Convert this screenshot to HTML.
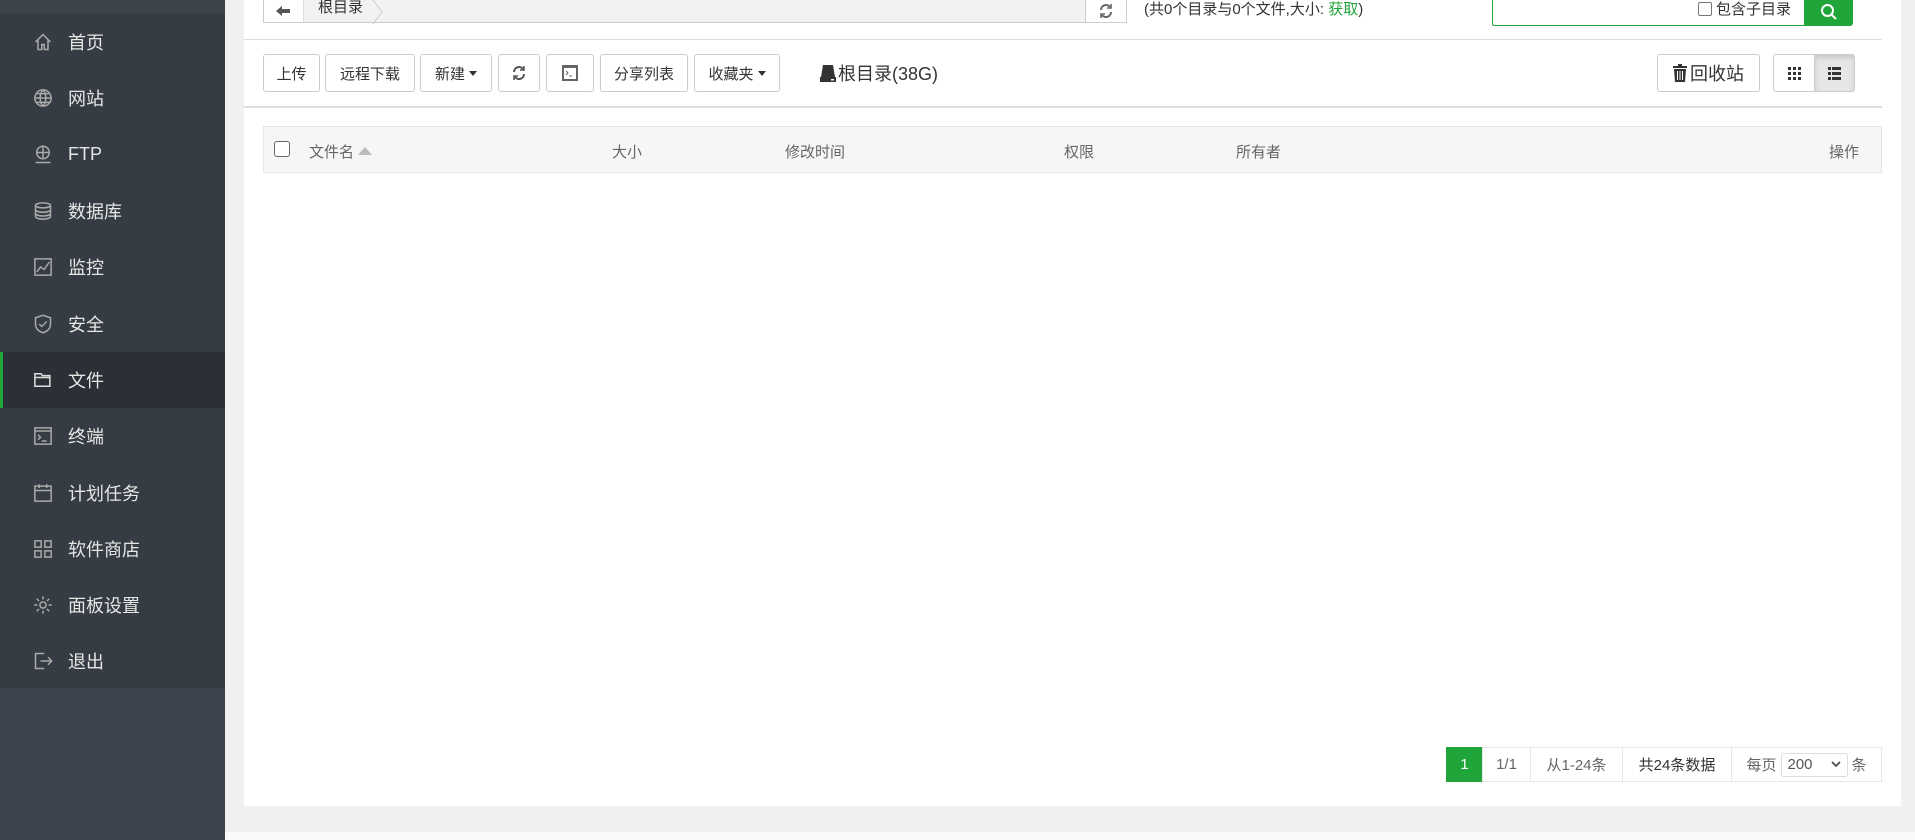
<!DOCTYPE html>
<html><head><meta charset="utf-8"><style>
*{box-sizing:border-box;margin:0;padding:0}
body{width:1915px;height:840px;overflow:hidden;background:#f0f0f0;font-family:"Liberation Sans","Noto Sans CJK SC",sans-serif;position:relative;color:#555}
.side{position:absolute;left:0;top:0;width:225px;height:840px;background:#3d444d}
.side .top{height:16px;background:#3c434b}
.menu{position:absolute;top:14px;left:0;width:225px;background:#353c43;height:674px}
.mi{height:56.3px;display:flex;align-items:center;padding-left:33px;color:#e6e6e6;font-size:18px;position:relative}
.mi .ic{width:20px;height:20px;margin-right:15px;display:flex;align-items:center;justify-content:center}
.mi .ic svg{width:20px;height:20px}
.mi.act{background:#2b3036;border-left:3px solid #20a53a;padding-left:30px}
.main{position:absolute;left:244px;top:0;width:1657px;height:806px;background:#fff}
.bottom{position:absolute;left:225px;top:832px;width:1690px;height:8px;background:#fafafa}
.abs{position:absolute}
.btn{position:absolute;top:54px;height:38px;border:1px solid #ccc;border-radius:3px;background:#fff;font-size:15px;color:#333;display:flex;align-items:center;justify-content:center}
.caret{display:inline-block;border-left:4px solid transparent;border-right:4px solid transparent;border-top:5px solid #333;margin-left:4px}
.th{position:absolute;top:126px;height:47px;left:263px;width:1619px;background:#f6f6f6;border:1px solid #e6e6e6;font-size:15px;color:#666}
.th span{position:absolute;top:14px}
.pg{position:absolute;top:747px;height:35px;border:1px solid #e6e6e6;font-size:15px;color:#666;display:flex;align-items:center;justify-content:center}
</style></head><body>
<div class="side"><div class="top"></div>
<div class="menu">
<div class="mi"><span class="ic"><svg viewBox="0 0 16 16" fill="none" stroke="#aaa" stroke-width="1.2"><path d="M2 8L8 2l6 6M4 6v8h3v-4h2v4h3V6"/></svg></span>首页</div>
<div class="mi"><span class="ic"><svg viewBox="0 0 16 16" fill="none" stroke="#aaa" stroke-width="1.2"><circle cx="8" cy="8" r="6.5"/><path d="M1.5 8h13M8 1.5c-3 3-3 10 0 13M8 1.5c3 3 3 10 0 13M3 4.5h10M3 11.5h10"/></svg></span>网站</div>
<div class="mi"><span class="ic"><svg viewBox="0 0 16 16" fill="none" stroke="#aaa" stroke-width="1.2"><circle cx="8" cy="6" r="5"/><path d="M3 6h10M8 1v10M2 14h12"/></svg></span>FTP</div>
<div class="mi"><span class="ic"><svg viewBox="0 0 16 16" fill="none" stroke="#aaa" stroke-width="1.2"><ellipse cx="8" cy="3.5" rx="6" ry="2"/><path d="M2 3.5v9c0 1.1 2.7 2 6 2s6-.9 6-2v-9M2 7c0 1.1 2.7 2 6 2s6-.9 6-2M2 10c0 1.1 2.7 2 6 2s6-.9 6-2"/></svg></span>数据库</div>
<div class="mi"><span class="ic"><svg viewBox="0 0 16 16" fill="none" stroke="#aaa" stroke-width="1.2"><rect x="1.5" y="1.5" width="13" height="13"/><path d="M3 12l3-4 3 2 4-6"/></svg></span>监控</div>
<div class="mi"><span class="ic"><svg viewBox="0 0 16 16" fill="none" stroke="#aaa" stroke-width="1.2"><path d="M8 1l6 2v5c0 4-3 6-6 7-3-1-6-3-6-7V3z"/><path d="M5 8l2 2 4-4"/></svg></span>安全</div>
<div class="mi act"><span class="ic"><svg viewBox="0 0 16 16" fill="none" stroke="#ddd" stroke-width="1.2"><path d="M1.5 3h5l1 1.5h6V13h-12z M1.5 6h12"/></svg></span>文件</div>
<div class="mi"><span class="ic"><svg viewBox="0 0 16 16" fill="none" stroke="#aaa" stroke-width="1.2"><rect x="1.5" y="1.5" width="13" height="13"/><path d="M1.5 4h13M4 7l2 2-2 2M7 12h4"/></svg></span>终端</div>
<div class="mi"><span class="ic"><svg viewBox="0 0 16 16" fill="none" stroke="#aaa" stroke-width="1.2"><rect x="1.5" y="2.5" width="13" height="12"/><path d="M1.5 6h13M5 1v3M11 1v3"/></svg></span>计划任务</div>
<div class="mi"><span class="ic"><svg viewBox="0 0 16 16" fill="none" stroke="#aaa" stroke-width="1.2"><rect x="1.5" y="1.5" width="5" height="5"/><rect x="9.5" y="1.5" width="5" height="5"/><rect x="1.5" y="9.5" width="5" height="5"/><rect x="9.5" y="9.5" width="5" height="5"/></svg></span>软件商店</div>
<div class="mi"><span class="ic"><svg viewBox="0 0 16 16" fill="none" stroke="#aaa" stroke-width="1.2"><circle cx="8" cy="8" r="2.5"/><path d="M8 1v2.5M8 12.5V15M1 8h2.5M12.5 8H15M3 3l1.8 1.8M11.2 11.2L13 13M3 13l1.8-1.8M11.2 4.8L13 3"/></svg></span>面板设置</div>
<div class="mi"><span class="ic"><svg viewBox="0 0 16 16" fill="none" stroke="#aaa" stroke-width="1.2"><path d="M9 2H2v12h7M6 8h9M12 5l3 3-3 3"/></svg></span>退出</div>
</div></div>
<div class="main"></div>
<div class="bottom"></div>
<div class="abs" style="left:263px;top:-2px;width:864px;height:25px;border:1px solid #ccc;background:#f2f2f2"></div>
<div class="abs" style="left:264px;top:-1px;width:40px;height:23px;background:#fff;border-right:1px solid #ddd;display:flex;align-items:center;justify-content:center"><svg width="16" height="12" viewBox="0 0 16 12"><path d="M0 6l6-5v3h8v4H6v3z" fill="#555"/></svg></div>
<div class="abs" style="left:318px;top:0px;font-size:15px;color:#333;line-height:16px">根目录</div>
<svg class="abs" style="left:372px;top:0" width="12" height="24"><path d="M1 0l9 12-9 12" fill="none" stroke="#ccc"/></svg>
<div class="abs" style="left:1085px;top:-1px;width:41px;height:23px;background:#fff;border-left:1px solid #ccc;display:flex;align-items:center;justify-content:center"><svg width="14" height="16" viewBox="0 0 14 16" fill="none" stroke="#666" stroke-width="2"><path d="M11 4A5 5 0 0 0 2 7M3 12a5 5 0 0 0 9-3"/><path d="M12 1v4H8M2 15v-4h4" stroke-width="1.6"/></svg></div>
<div class="abs" style="left:1144px;top:-2px;font-size:15px;color:#333">(共0个目录与0个文件,大小: <span style="color:#20a53a">获取</span>)</div>
<div class="abs" style="left:1492px;top:-2px;width:315px;height:28px;border:1px solid #20a53a;border-top:none;border-right:none;border-radius:0 0 0 2px;background:#fff"></div>
<div class="abs" style="left:1698px;top:-2px;font-size:15px;color:#333;display:flex;align-items:center"><span style="width:14px;height:14px;border:1px solid #777;border-radius:2px;margin-right:4px;display:inline-block"></span>包含子目录</div>
<div class="abs" style="left:1804px;top:-2px;width:49px;height:28px;background:#20a53a;border-radius:0 0 3px 0;display:flex;align-items:center;justify-content:center"><svg width="18" height="18" viewBox="0 0 18 18" fill="none" stroke="#fff" stroke-width="2"><circle cx="7.5" cy="7.5" r="5.5"/><path d="M11.5 11.5L16 16"/></svg></div>
<div class="abs" style="left:244px;top:39px;width:1638px;height:1px;background:#ddd"></div>
<div class="btn" style="left:263px;width:57px">上传</div>
<div class="btn" style="left:325px;width:90px">远程下载</div>
<div class="btn" style="left:420px;width:72px">新建<span class="caret"></span></div>
<div class="btn" style="left:498px;width:42px"><svg width="14" height="18" viewBox="0 0 14 16" fill="none" stroke="#555" stroke-width="2"><path d="M11 4A5 5 0 0 0 2 7M3 12a5 5 0 0 0 9-3"/><path d="M12 1v4H8M2 15v-4h4" stroke-width="1.6"/></svg></div>
<div class="btn" style="left:546px;width:48px"><svg width="18" height="18" viewBox="0 0 18 18"><rect x="1" y="1" width="16" height="16" fill="#666"/><rect x="3" y="4" width="12" height="11" fill="#fff"/><path d="M5 7l2 2-2 2M8 12h3" stroke="#666" fill="none"/></svg></div>
<div class="btn" style="left:600px;width:88px">分享列表</div>
<div class="btn" style="left:694px;width:86px">收藏夹<span class="caret"></span></div>
<div class="abs" style="left:820px;top:60px;font-size:18px;color:#333;display:flex;align-items:center"><svg width="16" height="20" viewBox="0 0 16 20" style="margin-right:2px"><path d="M3 2h10l2 12H1z" fill="#333"/><rect x="0" y="14" width="16" height="5" fill="#333"/><rect x="11" y="16" width="3" height="1.5" fill="#fff"/></svg>根目录(38G)</div>
<div class="btn" style="left:1657px;width:103px;font-size:18px"><svg width="14" height="20" viewBox="0 0 14 20" style="margin-right:3px"><path d="M5 1h4v2h5v2H0V3h5z M1 6h12l-1 13H2z" fill="#333"/><path d="M4.5 8v9M7 8v9M9.5 8v9" stroke="#fff"/></svg>回收站</div>
<div class="btn" style="left:1773px;width:82px;padding:0;justify-content:flex-start">
<div style="width:42px;height:36px;display:flex;align-items:center;justify-content:center;border-right:1px solid #ccc"><svg width="13" height="13"><g fill="#333"><rect x="0" y="0" width="3" height="3"/><rect x="5" y="0" width="3" height="3"/><rect x="10" y="0" width="3" height="3"/><rect x="0" y="5" width="3" height="3"/><rect x="5" y="5" width="3" height="3"/><rect x="10" y="5" width="3" height="3"/><rect x="0" y="10" width="3" height="3"/><rect x="5" y="10" width="3" height="3"/><rect x="10" y="10" width="3" height="3"/></g></svg></div>
<div style="width:39px;height:36px;background:#e6e6e6;display:flex;align-items:center;justify-content:center;box-shadow:inset 0 3px 5px rgba(0,0,0,.12)"><svg width="13" height="13"><g fill="#333"><rect x="0" y="0" width="3" height="3"/><rect x="4" y="0" width="9" height="3"/><rect x="0" y="5" width="3" height="3"/><rect x="4" y="5" width="9" height="3"/><rect x="0" y="10" width="3" height="3"/><rect x="4" y="10" width="9" height="3"/></g></svg></div></div>
<div class="abs" style="left:244px;top:106px;width:1638px;height:2px;background:#ddd"></div>
<div class="th">
<span style="left:10px;top:14px;width:16px;height:16px;border:1px solid #666;border-radius:3px;background:#fff"></span>
<span style="left:45px">文件名 <svg width="14" height="8" style="vertical-align:2px"><path d="M0 8L7 0l7 8z" fill="#bbb"/></svg></span>
<span style="left:348px">大小</span>
<span style="left:521px">修改时间</span>
<span style="left:800px">权限</span>
<span style="left:972px">所有者</span>
<span style="right:22px">操作</span>
</div>
<div class="pg" style="left:1446px;width:37px;background:#20a53a;border-color:#20a53a;color:#fff">1</div>
<div class="pg" style="left:1482px;width:49px">1/1</div>
<div class="pg" style="left:1530px;width:93px">从1-24条</div>
<div class="pg" style="left:1622px;width:110px;color:#333">共24条数据</div>
<div class="pg" style="left:1731px;width:151px">每页 <span style="display:inline-flex;align-items:center;justify-content:space-between;width:67px;height:24px;border:1px solid #ddd;border-radius:3px;margin:0 4px;padding:0 6px;color:#555">200<svg width="10" height="7"><path d="M1 1l4 4 4-4" fill="none" stroke="#444" stroke-width="1.6"/></svg></span> 条</div>
</body></html>
